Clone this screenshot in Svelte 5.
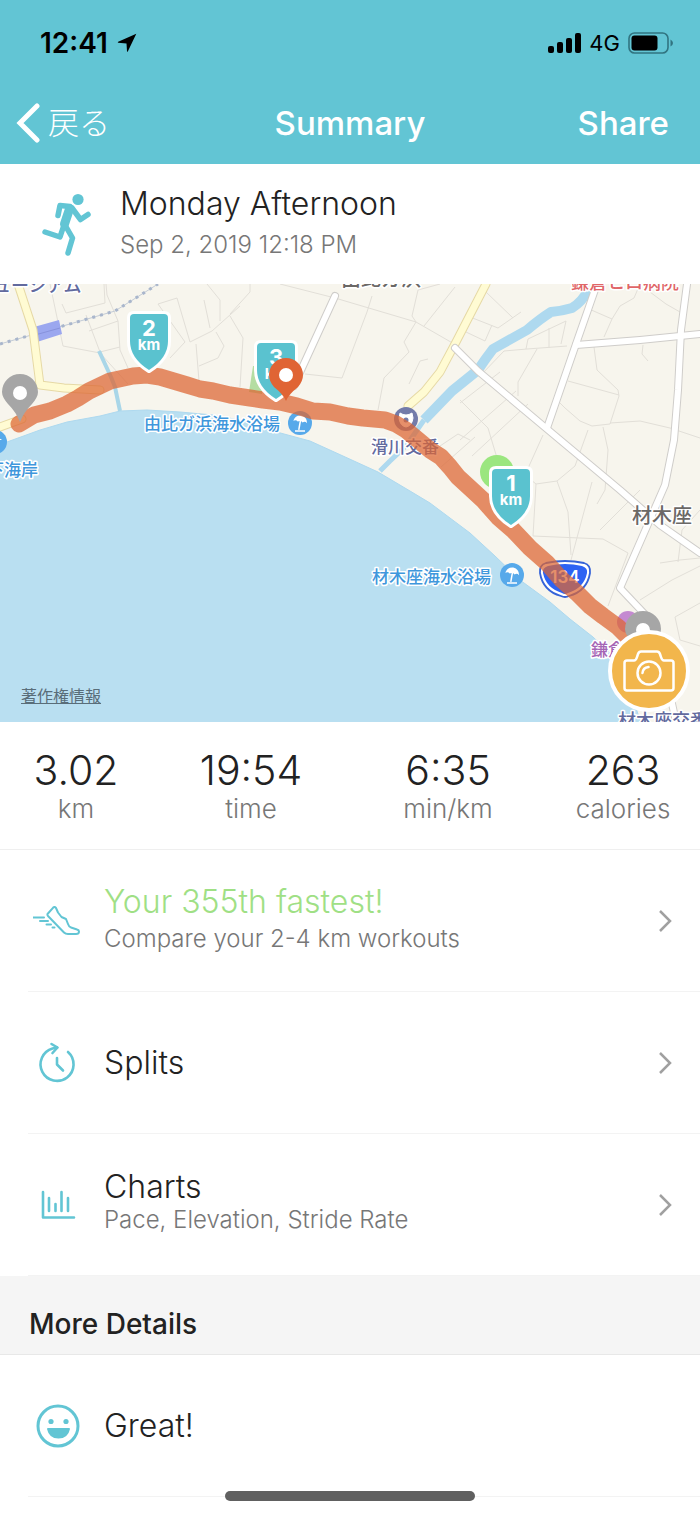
<script lang="ts">
  // Workout summary screen: status bar, nav, route map, totals and detail rows.

  type Stat = { value: string; unit: string }
  const stats: Stat[] = [
    { value: '3.02', unit: 'km' },
    { value: '19:54', unit: 'time' },
    { value: '6:35', unit: 'min/km' },
    { value: '263', unit: 'calories' },
  ]

  type Row = { icon: string; title: string; sub?: string; highlight?: boolean }
  const rows: Row[] = [
    {
      icon: 'shoe',
      title: 'Your 355th fastest!',
      sub: 'Compare your 2-4 km workouts',
      highlight: true,
    },
    { icon: 'clock', title: 'Splits' },
    { icon: 'chart', title: 'Charts', sub: 'Pace, Elevation, Stride Rate' },
  ]

  // Map geometry. The viewBox starts at y = 284.
  const coast =
    'M-4 446 L40 430 L67 422 L100 416 L120 411 L147 410 L180 412 L213 415 L245 421 L273 431 L310 441 L343 456 L378 472 L410 491 L430 503 L470 533 L495 556 L520 580 L550 602 L570 619 L593 637 L612 655 L630 690 L642 726 L-4 726 Z'
  const route =
    'M19 424 L34 415 L50 411 L67 404 L78 398 L89 391 L110 381 L133 376 L147 375 L160 377 L187 385 L200 389 L213 391 L230 395 L250 398 L263 400 L280 402 L297 406 L313 411 L330 412 L348 416 L363 418 L385 420 L396 424 L406 430 L418 440 L430 450 L441 457 L450 467 L458 477 L470 488 L483 500 L498 517 L513 530 L530 548 L547 563 L561 579 L577 593 L590 606 L603 616 L618 627 L634 643'

  const whiteRoads = [
    'M335 296 L302 368 L294 386',
    'M455 348 L478 371 L547 429 L620 490 L660 525 L700 553',
    'M597 284 L576 344 L547 428',
    'M576 345 L640 340 L700 334',
    'M687 284 L681 330 L678 390 L674 440 L665 485 L648 524 L620 588 L655 625 L676 722',
  ]
  const yellowRoads = [
    'M18 284 L33 330 L40 385 L64 388 L100 390',
    'M0 427 L22 419',
    'M486 284 L456 342 L440 372 L424 392 L408 406',
  ]
  const lanes = [
    'M50 284 L63 346 L100 353 L128 384',
    'M62 304 L66 313 L105 303 L104 284',
    'M86 315 L100 352 L120 347',
    'M89 331 L118 321 L107 295 L106 284',
    'M118 321 L120 350 L128 368',
    'M158 304 L177 298 L190 342 L212 331 L240 306',
    'M158 304 L185 342 L170 358',
    'M196 344 L199 381',
    'M216 332 L224 346 L218 358 L199 366',
    'M204 300 L210 328',
    'M220 321 L220 300 L207 284',
    'M230 316 L243 338 L240 387',
    'M230 314 L250 292 L250 284',
    'M280 284 L335 298 L416 322 L456 345',
    'M372 296 L367 312 L342 378 L305 374',
    'M416 322 L404 342 L409 352 L384 378 L378 410',
    'M416 322 L412 316 L418 290 L440 284',
    'M424 326 L455 287',
    'M409 384 L420 361 L428 359',
    'M465 315 L498 328 L521 312',
    'M466 332 L485 341 L492 325',
    'M486 292 L513 318',
    'M504 351 L527 349 L567 346',
    'M526 349 L528 339 L566 321 L561 344',
    'M537 349 L518 382 L518 396',
    'M549 328 L549 348',
    'M480 376 L504 351',
    'M460 403 L500 372',
    'M460 440 L516 391',
    'M472 456 L528 404',
    'M460 400 L488 428 L497 458',
    'M589 309 L612 319 L604 337',
    'M612 319 L620 306 L634 298 L640 284',
    'M650 292 L666 304 L680 312',
    'M594 347 L597 370 L618 390 L619 396 L610 424 L592 426 L580 421 L565 408 L560 403',
    'M568 381 L619 395',
    'M610 423 L640 421 L670 428 L700 438',
    'M643 345 L642 354 L648 361',
    'M588 430 L575 466 L557 481 L536 484 L533 536 L603 539 L628 553',
    'M603 427 L608 450 L605 490 L597 504',
    'M543 435 L525 475 L536 484',
    'M557 481 L568 512 L571 555',
    'M592 482 L571 560',
    'M640 490 L600 530',
    'M628 553 L608 606',
    'M660 563 L680 560 L700 558',
    'M678 562 L682 530 L700 510',
    'M640 600 L672 580 L700 566',
    'M700 603 L675 617 L680 640 L700 646',
    'M440 446 L458 434 L470 440',
    'M441 467 L475 437',
  ]

  const kmPins = [
    { x: 276, y: 343, n: '3' },
    { x: 149, y: 314, n: '2' },
    { x: 511, y: 469, n: '1' },
  ]
</script>

<div class="screen">
  <header class="top">
    <div class="status">
      <span class="time">12:41</span>
      <svg class="loc" viewBox="0 0 20 20" aria-hidden="true">
        <path d="M19.300 0.800 L10.800 18.500 Q10.300 19.300 10 18.300 L9.500 10.600 L1.200 9.700 Q0.200 9.300 1.200 8.800 Z" />
      </svg>
      <svg class="signal" viewBox="0 0 33 20" aria-hidden="true">
        <rect x="0" y="13" width="6" height="7" rx="2" />
        <rect x="9" y="9" width="6" height="11" rx="2" />
        <rect x="18" y="5" width="6" height="15" rx="2" />
        <rect x="27" y="0" width="6" height="20" rx="2" />
      </svg>
      <span class="network">4G</span>
      <svg class="battery" viewBox="0 0 46 22" aria-hidden="true">
        <rect x="1" y="1" width="39" height="20" rx="5.500" fill="none" stroke="#317480" stroke-width="1.600" />
        <rect x="3.500" y="3.500" width="26" height="15" rx="3" />
        <path d="M42.500 7.500 Q45 9 45 11 Q45 13 42.500 14.500 Z" fill="#317480" />
      </svg>
    </div>
    <nav class="nav">
      <button class="back">
        <svg viewBox="0 0 24 42" aria-hidden="true">
          <path d="M21 4 L4 21 L21 38" />
        </svg>
        <span>戻る</span>
      </button>
      <h1>Summary</h1>
      <button class="share">Share</button>
    </nav>
  </header>

  <main>
    <section class="workout">
      <svg class="runner" viewBox="0 0 50 66" aria-hidden="true">
        <circle cx="36" cy="8.500" r="5.600" fill="#62c5d4" />
        <path d="M16 24.500 L18 14.500 L28 15.500" />
        <path d="M30 17 L38.500 28.500 L46 23.500" />
        <path d="M27 19 L18 46 L3 41" />
        <path d="M23 34 L30.500 47 L26 62" />
        <path class="torso" d="M27.500 18 L22.500 33" />
      </svg>
      <div>
        <h2>Monday Afternoon</h2>
        <p>Sep 2, 2019 12:18 PM</p>
      </div>
    </section>

    <section class="map" aria-label="Route map">
      <svg class="canvas" viewBox="0 284 700 438">
        <rect x="0" y="284" width="700" height="438" fill="#f7f5ed" />
        {#each lanes as d (d)}
          <path class="lane" {d} />
        {/each}
        <path class="sea" d={coast} />

        <path d="M249 392 L253 366 L262 366 L262 394 Z" fill="#b5dda2" />
        <path class="stream" d="M99 351 L111 377 L115 387 L120 411" />
        <path class="river" d="M589 289 Q582 302 572 308 Q562 311 551 312 Q540 319 527 330 L493 349 Q486 358 478 370 L452 391 L424 420" />
        <path class="creek" d="M424 420 L406 446 L390 461 L380 471" />

        <path class="rail" d="M0 344 L35 334 L115 311 L158 284" />
        <path class="rail dash" d="M0 344 L35 334 L115 311 L158 284" />
        <path d="M34 327 L59 320 L62 334 L37 342 Z" fill="#9ba7ef" />
        <path d="M35 335 L60 328" stroke="#8792dc" fill="none" />

        {#each yellowRoads as d (d)}
          <path class="road-case yellow-case" {d} />
        {/each}
        {#each yellowRoads as d (d)}
          <path class="road yellow" {d} />
        {/each}
        {#each whiteRoads as d (d)}
          <path class="road-case" {d} />
        {/each}
        {#each whiteRoads as d (d)}
          <path class="road" {d} />
        {/each}

        <text class="label navy wide" x="-7" y="292">ュージアム</text>
        <text class="label grey large" x="341" y="286">由比ガ浜</text>
        <text class="label red wide" x="571" y="289">鎌倉ヒロ病院</text>
        <text class="label blue" x="144" y="430">由比ガ浜海水浴場</text>
        <text class="label blue" x="4" y="476">海岸</text>
        <text class="label blue" x="-13" y="476">下</text>
        <text class="label navy" x="371" y="453">滑川交番</text>
        <text class="label blue" x="372" y="583">材木座海水浴場</text>
        <text class="label grey large" x="632" y="523">材木座</text>
        <text class="label purple" x="591" y="656">鎌倉</text>
        <text class="label navy wide" x="618" y="727">材木座交番</text>

        {#each [[300, 423], [512, 575]] as [x, y] (x)}
          <g transform="translate({x} {y})">
            <circle r="12" fill="#57a9ea" />
            <g transform="rotate(10)">
              <path d="M-7 -1 Q-6 -7 0 -7.500 Q6 -7 7 -1 Q4.500 -3 2.500 -1 Q0 -3 -2.500 -1 Q-4.500 -3 -7 -1 Z" fill="#fff" />
              <path d="M0 -3 V7" stroke="#fff" stroke-width="1.500" />
            </g>
            <path d="M-5 8 H5" stroke="#fff" stroke-width="1.500" />
          </g>
        {/each}
        <circle cx="-5" cy="442" r="12" fill="#57a9ea" />
        <path d="M-6 440 Q-3 436 2 440 Z" fill="#fff" />

        <circle cx="406" cy="419" r="12" fill="#737ba9" />
        <path d="M400 413 Q406 417 412 413 L413 418 Q412 426 406 427 Q400 426 399 418 Z" fill="#fff" stroke="#fff" stroke-linejoin="round" />
        <circle cx="406" cy="420" r="2.500" fill="#737ba9" />

        <path
          d="M546 563 Q565 559 584 563 Q591 565 590 573 Q587 591 569 596 Q565 598 561 596 Q543 591 540 573 Q539 565 546 563 Z"
          fill="#fff" stroke="#3563d8" stroke-width="1.800"
        />
        <path
          d="M548 566 Q565 562 582 566 Q588 568 587 573 Q584 588 568 593 Q565 595 562 593 Q546 588 543 573 Q542 568 548 566 Z"
          fill="#2d63f3"
        />
        <text class="shield" x="565" y="583">134</text>
        <circle cx="628" cy="622" r="11" fill="#c48ad1" />
        <circle cx="497" cy="472" r="17" fill="#9be67f" />

        <path class="route" d={route} />

        {#each [[20, 421], [643, 658]] as [x, y] (x)}
          <g transform="translate({x} {y})">
            <path d="M0 1 Q-4 -9 -12 -17 Q-18 -24 -18 -29 A18 18 0 0 1 18 -29 Q18 -24 12 -17 Q4 -9 0 1 Z" fill="#a6a6a6" />
            <circle cy="-28" r="7" fill="#fff" />
          </g>
        {/each}

        {#each kmPins as pin (pin.n)}
          <g transform="translate({pin.x} {pin.y})">
            <path class="pin" d="M-15 0 H15 Q19 0 19 4 V27 Q19 44 0 56 Q-19 44 -19 27 V4 Q-19 0 -15 0 Z" />
            <text class="pin-num" y="22">{pin.n}</text>
            <text class="pin-unit" y="36">km</text>
          </g>
        {/each}

        <g transform="translate(286 400)">
          <path d="M0 1 Q-3 -6 -12 -13 Q-17 -19 -17 -25 A17 17 0 0 1 17 -25 Q17 -19 12 -13 Q3 -6 0 1 Z" fill="#e06434" />
          <circle cy="-25" r="7" fill="#fff" />
        </g>
      </svg>

      <a class="legal" href="#legal">著作権情報</a>
      <button class="camera" aria-label="Add photo">
        <svg viewBox="0 0 52 42" aria-hidden="true">
          <path d="M4 10.500 H11 Q13 10.500 14 7 L15 4 Q16 1.500 18 1.500 H34 Q36 1.500 37 4 L38 7 Q39 10.500 41 10.500 H48 Q50.500 10.500 50.500 13 V38 Q50.500 40.500 48 40.500 H4 Q1.500 40.500 1.500 38 V13 Q1.500 10.500 4 10.500 Z" />
          <circle cx="26" cy="23" r="11.500" />
          <path d="M19.500 23 Q20 17.500 25.500 17" />
        </svg>
      </button>
    </section>

    <dl class="stats">
      {#each stats as s (s.unit)}
        <div>
          <dd>{s.value}</dd>
          <dt>{s.unit}</dt>
        </div>
      {/each}
    </dl>

    <ul class="rows">
      {#each rows as row (row.icon)}
        <li>
          <button class="row">
            <svg class="icon" viewBox="0 0 48 48" aria-hidden="true">
              {#if row.icon === 'shoe'}
                <path d="M20 10.800 L14.500 17 Q14 18 15 19 L31 35.500 Q32.500 37 35 37 H43 Q46 37 46 34.500 Q46 33 44 32.500 L38 30.500 Q36 30 35 27 L33 22 L28.500 20 L25 15.500 L23 11 Q21.500 9.300 20 10.800 Z" />
                <path d="M0 20.500 H11 M7 24 H15 M13.500 27.500 H18 M19.500 30.500 H21.500" />
              {:else if row.icon === 'clock'}
                <path class="thick" d="M35 13 A16.500 16.500 0 1 1 19.500 9.500 L24 8.500" />
                <path class="thick" d="M18.500 5 L24.500 8.500 L19.500 14" />
                <path class="thick" d="M24 19 V25.500 L30 31.500" />
              {:else}
                <path class="thick" d="M10 11 V36.500 H41" />
                <path class="thick" d="M16 17 V30 M22.500 23 V30 M28.500 11 V30 M35 17 V30" />
              {/if}
            </svg>
            <span class="text">
              <span class="title" class:highlight={row.highlight}>{row.title}</span>
              {#if row.sub}<span class="sub">{row.sub}</span>{/if}
            </span>
            <svg class="chevron" viewBox="0 0 14 24" aria-hidden="true">
              <path d="M2 2 L12 12 L2 22" />
            </svg>
          </button>
        </li>
      {/each}
    </ul>

    <h3>More Details</h3>

    <ul class="rows">
      <li>
        <div class="row">
          <svg class="icon" viewBox="0 0 48 48" aria-hidden="true">
            <circle class="face" cx="25" cy="24" r="20" />
            <circle class="dot" cx="18" cy="19.500" r="2.600" />
            <circle class="dot" cx="33" cy="19.500" r="2.600" />
            <path class="dot" d="M15 26 H36 Q37 26 37 27 Q35 36.500 25.500 36.500 Q16 36.500 14 27 Q14 26 15 26 Z" />
          </svg>
          <span class="text"><span class="title">Great!</span></span>
        </div>
      </li>
    </ul>
  </main>

  <div class="home"></div>
</div>

<style>
  :global(body) {
    background: #fff;
  }
  .screen {
    font-family: Inter, 'Noto Sans CJK JP', sans-serif;
    font-weight: 300;
    color: #222;
    padding-bottom: 20px;
  }
  h1,
  h2,
  h3,
  p,
  dl,
  dd,
  ul {
    margin: 0;
    padding: 0;
  }
  button {
    border: 0;
    padding: 0;
    background: none;
    font: inherit;
    color: inherit;
    cursor: pointer;
  }
  svg {
    display: block;
  }

  .top {
    background: #62c5d4;
  }
  .status {
    display: flex;
    align-items: center;
    height: 86px;
    padding: 0 26px 0 40px;
    color: #000;
  }
  .time {
    font-size: 28px;
    font-weight: 600;
  }
  .loc {
    width: 20px;
    height: 20px;
    margin: 0 auto 0 9px;
  }
  .signal {
    width: 33px;
    height: 20px;
  }
  .network {
    margin: 0 8px;
    font-size: 22px;
    font-weight: 400;
  }
  .battery {
    width: 46px;
    height: 22px;
  }
  .nav {
    display: grid;
    grid-template-columns: 1fr auto 1fr;
    align-items: center;
    height: 78px;
    padding: 0 31px 4px 16px;
    color: #fff;
    box-sizing: border-box;
  }
  .back {
    display: flex;
    align-items: center;
    gap: 8px;
    font-size: 31px;
  }
  .back span {
    padding-bottom: 6px;
  }
  .back svg {
    width: 24px;
    height: 42px;
  }
  .back path {
    fill: none;
    stroke: #fff;
    stroke-width: 5;
    stroke-linecap: round;
  }
  .nav h1,
  .share {
    font-size: 33px;
    font-weight: 500;
  }
  .nav h1 {
    padding-left: 15px;
  }
  .share {
    justify-self: end;
  }

  .workout {
    display: flex;
    align-items: center;
    gap: 28px;
    height: 120px;
    padding-left: 42px;
  }
  .runner {
    width: 50px;
    height: 66px;
  }
  .runner path {
    fill: none;
    stroke: #62c5d4;
    stroke-width: 5.500;
    stroke-linecap: round;
    stroke-linejoin: round;
  }
  .runner .torso {
    stroke-width: 9;
  }
  h2 {
    font-size: 32px;
    font-weight: 300;
    line-height: 42px;
  }
  .workout p {
    font-size: 24px;
    line-height: 40px;
    color: #777;
  }

  .map {
    position: relative;
    overflow: hidden;
  }
  .canvas {
    width: 100%;
    height: auto;
  }
  .sea {
    fill: #b9dff1;
    stroke: #aed9ef;
    stroke-width: 1;
  }
  .lane,
  .stream,
  .river,
  .creek,
  .rail,
  .road,
  .road-case,
  .route {
    fill: none;
    stroke-linejoin: round;
  }
  .lane {
    stroke: #e2dfd8;
    stroke-width: 1;
  }
  .stream {
    stroke: #a9d6e8;
    stroke-width: 4;
  }
  .river {
    stroke: #aed9ef;
    stroke-width: 10;
  }
  .creek {
    stroke: #aed9ef;
    stroke-width: 5;
  }
  .rail {
    stroke: #c3cbd6;
    stroke-width: 1;
  }
  .dash {
    stroke: #a9b6cc;
    stroke-width: 3;
    stroke-dasharray: 3 5;
  }
  .road-case {
    stroke: #cfcdca;
    stroke-width: 8;
    stroke-linecap: round;
  }
  .road {
    stroke: #fff;
    stroke-width: 6;
    stroke-linecap: round;
  }
  .yellow-case {
    stroke: #e6d9a5;
    stroke-width: 9;
  }
  .yellow {
    stroke: #fffbd3;
    stroke-width: 7;
  }
  .route {
    stroke: rgb(221 102 51 / 0.73);
    stroke-width: 17;
    stroke-linecap: round;
  }
  .label {
    font-family: 'Noto Sans CJK JP', sans-serif;
    font-size: 17px;
    font-weight: 500;
    stroke: #fff;
    stroke-width: 3;
    stroke-linejoin: round;
    paint-order: stroke;
  }
  .wide {
    font-size: 18px;
  }
  .large {
    font-size: 20px;
  }
  .blue {
    fill: #3f97dc;
  }
  .navy {
    fill: #626a9e;
  }
  .grey {
    fill: #6b6866;
  }
  .red {
    fill: #e06668;
  }
  .purple {
    fill: #a565b5;
  }
  .shield {
    fill: #fff;
    font-size: 17px;
    font-weight: 600;
    text-anchor: middle;
  }
  .pin {
    fill: #5ac2cf;
    stroke: #fff;
    stroke-width: 6;
    stroke-linejoin: round;
    paint-order: stroke;
  }
  .pin-num,
  .pin-unit {
    fill: #fff;
    font-weight: 700;
    text-anchor: middle;
  }
  .pin-num {
    font-size: 22px;
  }
  .pin-unit {
    font-size: 15px;
  }
  .legal {
    position: absolute;
    left: 21px;
    bottom: 14px;
    font-size: 16px;
    line-height: 24px;
    font-weight: 400;
    color: #596d79;
  }
  .camera {
    position: absolute;
    right: 10px;
    bottom: 10px;
    display: grid;
    place-items: center;
    width: 82px;
    height: 82px;
    border: 4px solid #fff;
    border-radius: 50%;
    background: #f2b64c;
  }
  .camera svg {
    width: 52px;
    height: 42px;
    fill: none;
    stroke: #fff;
    stroke-width: 2.500;
    stroke-linecap: round;
  }

  .stats {
    display: grid;
    grid-template-columns: 152fr 198fr 196fr 154fr;
    padding: 24px 0 25px;
    border-bottom: 1px solid #efefef;
    text-align: center;
  }
  .stats div {
    display: flex;
    flex-direction: column;
  }
  dd {
    font-size: 41px;
    line-height: 48px;
  }
  dt {
    font-size: 26px;
    line-height: 30px;
    color: #777;
  }

  .rows {
    list-style: none;
  }
  li {
    margin-left: 28px;
    border-bottom: 1px solid #f3f3f3;
  }
  .row {
    display: flex;
    align-items: center;
    gap: 23px;
    width: 100%;
    min-height: 141px;
    padding: 0 28px 0 5px;
    box-sizing: border-box;
    text-align: left;
  }
  .icon {
    flex: none;
    width: 48px;
    height: 48px;
    fill: none;
    stroke: #62c5d4;
    stroke-width: 2;
    stroke-linecap: round;
    stroke-linejoin: round;
  }
  .thick {
    stroke-width: 2.600;
  }
  .face {
    stroke-width: 3;
  }
  .dot {
    fill: #62c5d4;
    stroke: none;
  }
  .text {
    flex: 1;
    display: flex;
    flex-direction: column;
  }
  .title {
    font-size: 32px;
    line-height: 36px;
  }
  .highlight {
    color: #9fe085;
  }
  .sub {
    padding-bottom: 6px;
    font-size: 24px;
    line-height: 30px;
    color: #777;
  }
  .highlight + .sub {
    padding: 4px 0;
  }
  .chevron {
    width: 14px;
    height: 24px;
    fill: none;
    stroke: #a0a0a0;
    stroke-width: 2.500;
  }

  h3 {
    padding: 32px 29px 14px;
    border-bottom: 1px solid #e8e8e8;
    background: #f5f5f5;
    font-size: 28px;
    font-weight: 500;
    line-height: 32px;
  }

  .home {
    position: fixed;
    left: 50%;
    bottom: 15px;
    width: 250px;
    height: 10px;
    margin-left: -125px;
    border-radius: 5px;
    background: #606060;
  }
</style>
